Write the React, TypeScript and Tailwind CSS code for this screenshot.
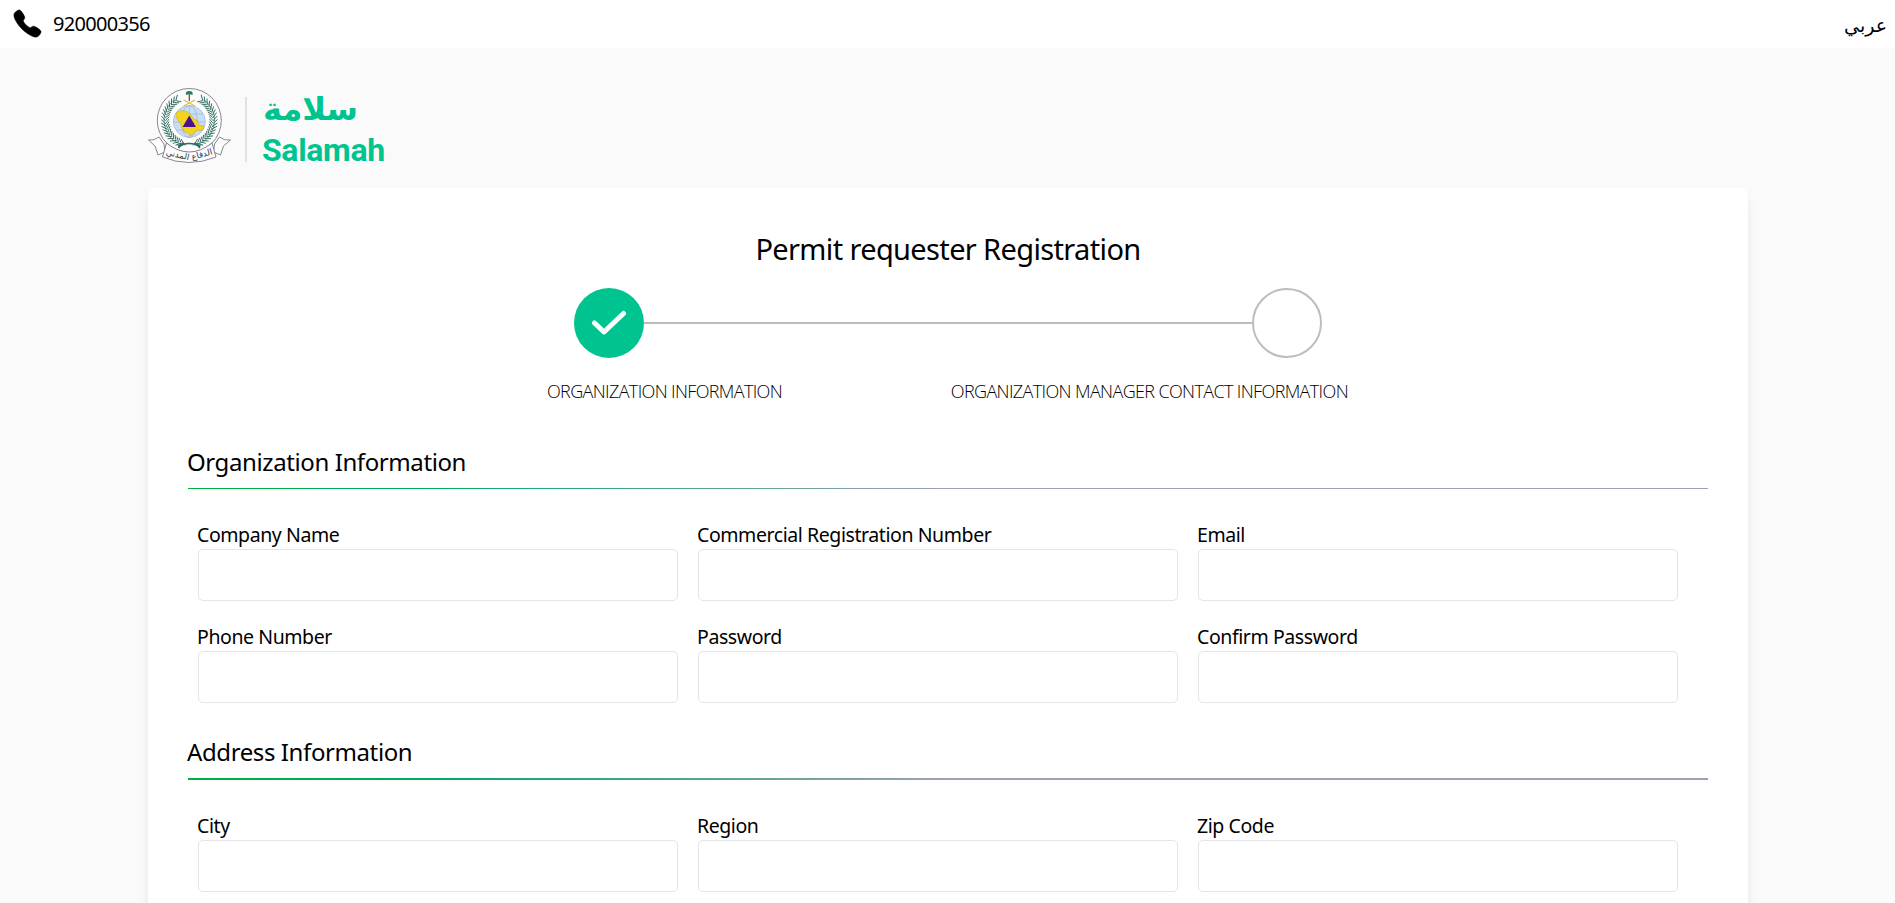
import React from "react";
import { IoCall } from "react-icons/io5";

const leafAngles = Array.from({ length: 20 }, (_, i) => 104 + i * 7);

function Leaves({ flip = false }: { flip?: boolean }) {
  return (
    <g transform={flip ? "translate(82.6 0) scale(-1 1)" : undefined} stroke="#2f6b5e" strokeWidth="0.9" fill="none">
      <path d="M38 57C26 56 17 47 16 33C16 24 20 16 27 12" strokeWidth="0.7" />
      {leafAngles.map((deg) => {
        const a = (deg * Math.PI) / 180;
        return (
          <g key={deg} transform={`translate(${41.3 + 24.5 * Math.cos(a)} ${32.5 + 24.5 * Math.sin(a)}) rotate(${deg})`}>
            <path d="M-1 -1L3.500 4M-1 0L-4.500 3.500" />
          </g>
        );
      })}
    </g>
  );
}

function Emblem() {
  return (
    <svg viewBox="0 0 83 76" className="h-[76px] w-[83px] shrink-0" aria-hidden="true">
      <circle cx="41.3" cy="32.5" r="32" fill="#fcfcfd" stroke="#6b6875" strokeWidth="0.8" />
      <Leaves />
      <Leaves flip />
      <circle cx="41.3" cy="33.5" r="16" fill="#c9ddf5" />
      <g stroke="#8da5c4" strokeWidth="0.5" fill="none">
        <circle cx="41.3" cy="33.5" r="16" />
        <ellipse cx="41.3" cy="33.5" rx="8" ry="16" />
        <path d="M41.3 18V50M25.300 34H57.300M28 26H55M28 42H55" />
      </g>
      <path
        d="M28 25L32 22.500L38 23L43 27L46 31L49 32L51 37L56 38L55 42L48 43L43 48L40 45L36 44L33 37L28 29Z"
        fill="#f4d220"
        stroke="#b59a28"
        strokeWidth="0.4"
      />
      <path d="M41.300 27.500L48 39H34.600Z" fill="#4b1290" />
      <path d="M35.500 12L47 18M47 12L35.500 18" stroke="#dcc04a" strokeWidth="1.300" />
      <path d="M41.300 6V13" stroke="#8b4a2c" strokeWidth="1.300" />
      <path d="M38 7Q37 3 41.300 3Q45.500 3 44.500 7L41.300 6Z" fill="#21825a" />
      <path d="M30.500 60C35 54 47.500 54 52 60M36 55L30 58M46.500 55L52.500 58" stroke="#2f6b5e" strokeWidth="1.500" fill="none" />
      <g fill="#fcfcfd" stroke="#6b6875" strokeWidth="0.8" strokeLinejoin="round">
        <path d="M16 56L11 49Q6 53 0.500 52L7 58L10 67L17 64Z" />
        <path d="M66.500 56L71.500 49Q76.500 53 82.500 52L75.500 58L72.500 67L65.500 64Z" />
        <path d="M18.500 55Q41 73 64 55L68 69Q41 80 14.500 69Z" />
      </g>
      <g fontSize="8.500" fontFamily="'DejaVu Sans', sans-serif" fill="#33323d" textAnchor="middle">
        <text transform="translate(54.500 69) rotate(-15)">الدفاع</text>
        <text transform="translate(29 69.500) rotate(13)">المدني</text>
      </g>
    </svg>
  );
}

function TopBar() {
  return (
    <div className="flex h-12 items-center justify-between bg-white pr-2 pl-[12px]">
      <div className="flex items-center gap-[10px]">
        <IoCall className="mb-[2px] size-[31px] stroke-current [stroke-width:10px]" />
        <span className="text-[20px] leading-[30px] tracking-[-0.68px]">920000356</span>
      </div>
      <a className="pt-[2px] font-['DejaVu_Sans',sans-serif] text-[19px] leading-[30px]" dir="rtl" lang="ar">
        عربي
      </a>
    </div>
  );
}

function Brand() {
  return (
    <header className="flex h-[140px] items-start px-[148px] pt-[40px]">
      <Emblem />
      <div className="mt-[9px] ml-[14px] h-[65px] w-[2px] bg-[#e2e2e2]" />
      <div className="ml-[15px] flex flex-col items-start text-[#00c48f]">
        <span className="h-[40px] pl-px font-['DejaVu_Sans',sans-serif] text-[32px] leading-[42px] font-bold" dir="rtl" lang="ar">
          سلامة
        </span>
        <span className="font-[Roboto,sans-serif] text-[32px] leading-[44px] font-bold tracking-[-0.35px]">Salamah</span>
      </div>
    </header>
  );
}

function Stepper() {
  return (
    <div className="mx-auto mt-[19px] w-[800px]">
      <div className="mx-[26px] flex items-center">
        <div className="flex size-[70px] items-center justify-center rounded-full bg-[#00c48f]">
          <svg viewBox="0 0 36 26" className="h-[26px] w-[36px]" fill="none" stroke="white" strokeWidth="5" strokeLinecap="round" strokeLinejoin="round">
            <path d="M3.500 13L13 22L32.500 3.500" />
          </svg>
        </div>
        <div className="h-[2px] grow bg-[#bdbdbd]" />
        <div className="size-[70px] rounded-full border-2 border-[#bdbdbd] bg-white" />
      </div>
      <div className="mt-[20px] flex justify-between font-['Open_Sans',sans-serif] text-[18px] leading-[27px] font-light whitespace-nowrap text-black uppercase">
        <span className="-ml-px tracking-[-0.64px]">Organization Information</span>
        <span className="tracking-[-0.63px]">Organization Manager Contact Information</span>
      </div>
    </div>
  );
}

function Field({ label }: { label: string }) {
  return (
    <label className="block h-[102px] px-[10px]">
      <span className="-ml-px block h-[30px] text-[19.5px] leading-[32px] tracking-[-0.42px]">{label}</span>
      <input className="block h-[52px] w-full rounded-[5px] border border-[#e4e4e9] bg-white px-3 outline-none" />
    </label>
  );
}

function Section({ title, fields, rule }: { title: string; fields: string[]; rule: string }) {
  return (
    <section>
      <h2 className="-ml-px h-[38px] text-[24px] leading-[38px] tracking-[-0.4px]">{title}</h2>
      <div className={`bg-[linear-gradient(90deg,#00b140_0%,#00ab63_16%,#a0a0b4_50%)] ${rule}`} />
      <div className="mt-[30px] grid w-[1500px] grid-cols-3">
        {fields.map((f) => (
          <Field key={f} label={f} />
        ))}
      </div>
    </section>
  );
}

export default function App() {
  return (
    <div className="h-[903px] overflow-hidden bg-[#fafafa] font-['Noto_Sans',sans-serif] text-black">
      <TopBar />
      <Brand />
      <main className="ml-[148px] h-[900px] w-[1600px] rounded-lg bg-white px-10 pt-[41px] shadow-[0_8px_12px_rgba(0,0,0,0.07)]">
        <h1 className="text-center text-[29px] leading-[40px] tracking-[-0.64px]">Permit requester Registration</h1>
        <Stepper />
        <div className="mt-[38px] flex flex-col gap-[10px]">
          <Section
            title="Organization Information"
            rule="mt-[7px] h-px"
            fields={["Company Name", "Commercial Registration Number", "Email", "Phone Number", "Password", "Confirm Password"]}
          />
          <Section title="Address Information" rule="mt-[7px] h-[2px]" fields={["City", "Region", "Zip Code"]} />
        </div>
      </main>
    </div>
  );
}
